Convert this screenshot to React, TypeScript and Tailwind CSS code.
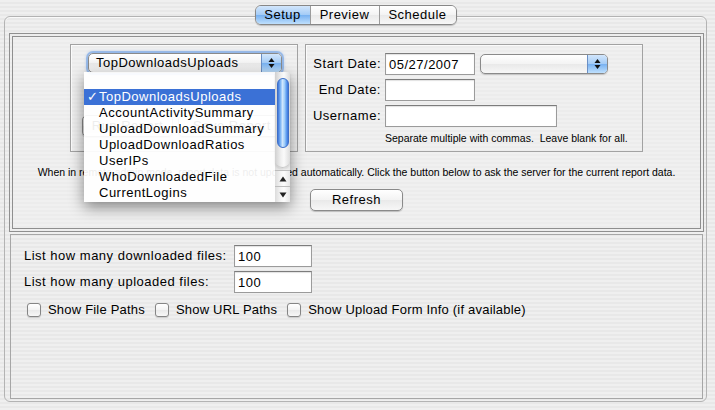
import React from "react";

const STRIPES =
  "bg-[repeating-linear-gradient(180deg,#efefef_0px,#efefef_2px,#e8e8e8_2px,#e8e8e8_4px)]";
const AQUA_WHITE = "bg-[linear-gradient(180deg,#ffffff_0%,#f3f3f3_50%,#e9e9e9_51%,#f7f7f7_100%)]";
const AQUA_BLUE = "bg-[linear-gradient(180deg,#d2e6fc_0%,#a3cbf6_50%,#78b1f1_51%,#bfe0fd_100%)]";

function UpDown() {
  return (
    <svg width="7" height="12" viewBox="0 0 7 12">
      <path d="M3.5 1 L6.5 5 H0.5 Z M3.5 11 L6.5 7 H0.5 Z" fill="#111" />
    </svg>
  );
}

function Combo({ text, focused, className }: { text: string; focused?: boolean; className: string }) {
  return (
    <div
      className={`flex h-[20px] overflow-hidden rounded-[5px] border border-[#8a8a8a] ${AQUA_WHITE} ${
        focused ? "shadow-[0_0_0_2px_rgba(108,158,228,0.55),0_0_3px_2px_rgba(108,158,228,0.35)]" : "shadow-[0_1px_1px_rgba(0,0,0,0.18)]"
      } ${className}`}
    >
      <div className="flex-1 truncate pl-[7px] text-[13px] leading-[18px] tracking-[0.5px] text-black">{text}</div>
      <div className={`flex w-[20px] items-center justify-center border-l border-[#6b8fc4] ${AQUA_BLUE}`}>
        <UpDown />
      </div>
    </div>
  );
}

function TextField({ value, className }: { value?: string; className: string }) {
  return (
    <div
      className={`h-[22px] border border-[#9b9b9b] border-t-[#7c7c7c] bg-white pl-[3px] text-[13px] leading-[21px] tracking-[0.5px] text-black shadow-[inset_0_1px_1px_rgba(0,0,0,0.12)] ${className}`}
    >
      {value}
    </div>
  );
}

function Button({ label, className }: { label: string; className: string }) {
  return (
    <div
      className={`flex h-[22px] items-center justify-center rounded-[5px] border border-[#8a8a8a] ${AQUA_WHITE} text-[13px] tracking-[0.5px] text-black shadow-[0_1px_1px_rgba(0,0,0,0.2)] ${className}`}
    >
      {label}
    </div>
  );
}

function Check({ label }: { label: string }) {
  return (
    <div className="flex items-center gap-[7px]">
      <div className={`h-[14px] w-[14px] rounded-[3px] border border-[#858585] ${AQUA_WHITE} shadow-[0_1px_1px_rgba(0,0,0,0.15)]`} />
      <span className="text-[13px] leading-[16px] tracking-[0.2px] text-black">{label}</span>
    </div>
  );
}

const REPORTS = [
  "TopDownloadsUploads",
  "AccountActivitySummary",
  "UploadDownloadSummary",
  "UploadDownloadRatios",
  "UserIPs",
  "WhoDownloadedFile",
  "CurrentLogins",
];

function ReportMenu() {
  return (
    <div className="absolute left-[-4px] top-[19px] z-20 flex h-[130px] w-[206px] shadow-[0_5px_14px_rgba(0,0,0,0.45)]">
      <div className="w-[191px] bg-white/[0.93]">
        <div className="h-[17px]" />
        {REPORTS.map((r, i) => (
          <div
            key={r}
            className={`relative h-[16px] pl-[15px] text-[13px] leading-[16px] tracking-[0.5px] ${
              i === 0 ? "bg-[#3b71d6] text-white" : "text-black"
            }`}
          >
            {i === 0 && <span className="absolute left-[3px] top-0 text-[13px] leading-[16px]">✓</span>}
            {r}
          </div>
        ))}
      </div>
      <div className="flex w-[15px] flex-col bg-[linear-gradient(90deg,#dcdcdc,#f5f5f5_40%,#fcfcfc_60%,#e6e6e6)]">
        <div className="flex h-[96px] justify-center rounded-b-[8px] border-b border-[#c8c8c8] bg-[linear-gradient(90deg,#d0d0d0,#f0f0f0_40%,#fafafa_60%,#dcdcdc)] pt-[6px] shadow-[0_2px_2px_rgba(0,0,0,0.12)]">
          <div className="h-[70px] w-[12px] rounded-full border border-[#3d6fc8] bg-[linear-gradient(90deg,#3f75d8,#80b6f4_25%,#cfe6fd_45%,#a2cffa_65%,#5d9bef_85%,#3f75d8)]" />
        </div>
        <div className="flex-1" />
        <div className="flex h-[16px] items-center justify-center border-t border-[#bdbdbd]">
          <svg width="8" height="6" viewBox="0 0 8 6">
            <path d="M4 0.5 L7.5 5.5 H0.5 Z" fill="#222" />
          </svg>
        </div>
        <div className="flex h-[16px] items-center justify-center border-t border-[#bdbdbd]">
          <svg width="8" height="6" viewBox="0 0 8 6">
            <path d="M4 5.5 L7.5 0.5 H0.5 Z" fill="#222" />
          </svg>
        </div>
      </div>
    </div>
  );
}

export default function App() {
  return (
    <div className={`h-[410px] w-[715px] overflow-hidden pt-[5px] font-['Liberation_Sans',Arial,sans-serif] ${STRIPES}`}>
      {/* tabs */}
      <div className="relative z-10 flex h-[20px] justify-center pr-[4px]">
        <div className="flex h-[20px] overflow-hidden rounded-[6px] border border-[#878787] text-[13px] leading-[18px] tracking-[0.5px] text-black shadow-[0_1px_1px_rgba(0,0,0,0.2)]">
          <div className={`w-[54px] text-center ${AQUA_BLUE}`}>Setup</div>
          <div className={`w-[69px] border-l border-[#9c9c9c] text-center ${AQUA_WHITE}`}>Preview</div>
          <div className={`w-[77px] border-l border-[#9c9c9c] text-center ${AQUA_WHITE}`}>Schedule</div>
        </div>
      </div>

      {/* tab pane */}
      <div className="-mt-[9px] ml-[4px] mr-[8px] h-[386px] rounded-[6px] border border-[#b3b3b3] pl-[4px] pr-[2px] pt-[16px] shadow-[inset_0_1px_0_#fafafa]">
        {/* report section */}
        <div className="h-[199px] border border-[#8f8f8f] bg-[#f2f2f2]/40 p-[2px]">
          <div className="flex h-full flex-col items-center border border-[#8f8f8f] pt-[7px]">
            <div className="flex gap-[7px]">
              <div className="h-[108px] w-[228px] border border-[#a2a2a2] shadow-[inset_1px_1px_0_#fbfbfb]">
                <div className="relative ml-[17px] mt-[8px] w-[194px]">
                  <Combo text="TopDownloadsUploads" focused className="w-[194px]" />
                  <ReportMenu />
                </div>
                <div className="ml-[11px] mt-[42px] flex gap-[5px]">
                  <Button label="Run Report" className="w-[91px]" />
                  <Button label="Save Report" className="w-[108px]" />
                </div>
              </div>

              <div className="h-[108px] w-[338px] border border-[#a2a2a2] pt-[8px] shadow-[inset_1px_1px_0_#fbfbfb]">
                <div className="grid grid-cols-[75px_1fr] items-center gap-x-[4px] gap-y-[4px] text-[13px] tracking-[0.5px] text-black">
                  <div className="text-right">Start Date:</div>
                  <div className="flex items-center gap-[5px]">
                    <TextField value="05/27/2007" className="w-[90px]" />
                    <Combo text="" className="w-[128px]" />
                  </div>
                  <div className="text-right">End Date:</div>
                  <TextField className="w-[90px]" />
                  <div className="text-right">Username:</div>
                  <TextField className="w-[172px]" />
                  <div />
                  <div className="mt-[1px] text-[10.5px] leading-[12px] tracking-normal">
                    Separate multiple with commas.&nbsp; Leave blank for all.
                  </div>
                </div>
              </div>
            </div>

            <div className="mt-[14px] text-[10.5px] leading-[12px] text-black">
              When in remote admin mode, report data is not updated automatically. Click the button below to ask the server for the current report data.
            </div>
            <Button label="Refresh" className="mt-[11px] w-[93px]" />
          </div>
        </div>

        {/* options section */}
        <div className="mx-[1px] mt-[2px] h-[165px] border border-[#a6a6a6] pl-[13px] pt-[10px]">
          <div className="grid grid-cols-[210px_78px] items-center gap-y-[4px] text-[13px] tracking-[0.5px] text-black">
            <div>List how many downloaded files:</div>
            <TextField value="100" className="w-[78px]" />
            <div>List how many uploaded files:</div>
            <TextField value="100" className="w-[78px]" />
          </div>
          <div className="ml-[3px] mt-[9px] flex gap-[10px]">
            <Check label="Show File Paths" />
            <Check label="Show URL Paths" />
            <Check label="Show Upload Form Info (if available)" />
          </div>
        </div>
      </div>
    </div>
  );
}
